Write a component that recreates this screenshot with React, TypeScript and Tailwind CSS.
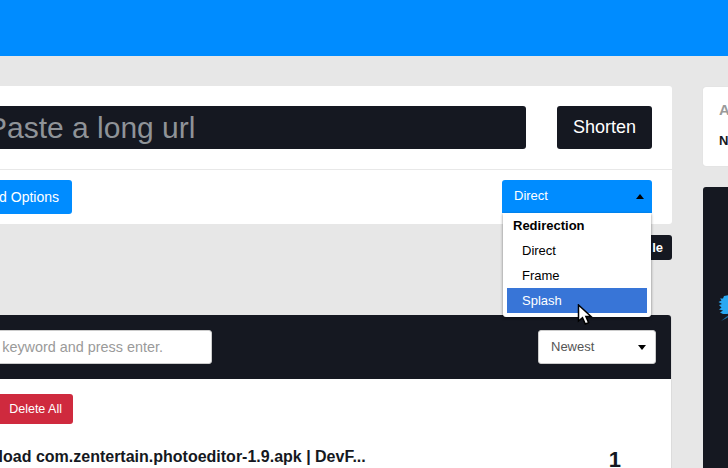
import React from "react";

export default function App() {
  return (
    <div className="w-[728px] h-[468px] overflow-hidden bg-[#e7e7e7] font-['Liberation_Sans',Arial,sans-serif] relative">
      <div className="h-14 bg-[#008cff]" />
      <div className="flex mt-[30px] -ml-[40px] w-[900px]">
        <div className="w-[712px] shrink-0">
          <div className="bg-white rounded-[3px] h-[138px]">
            <div className="h-[84px] pt-5 pl-[30px] pr-5 flex border-b border-[#e8e8e8]">
              <div className="w-[536px] h-[43px] bg-[#151821] rounded-[3px] text-[#8f9398] text-[30px] leading-[44px] whitespace-nowrap">
                <span className="block -ml-[3px]">Paste a long url</span>
              </div>
              <div className="ml-[31px] w-[95px] h-[43px] bg-[#151821] rounded-[3px] text-white text-[18px] leading-[43px] text-center">
                Shorten
              </div>
            </div>
            <div className="pt-[10px] pl-[30px] pr-5 flex justify-between">
              <div className="w-[82px] h-[34px] bg-[#008cff] rounded-[3px] text-white text-[14px] leading-[34px] overflow-hidden whitespace-nowrap">
                <span className="block text-right pr-[13px]">d Options</span>
              </div>
              <div className="w-[150px] h-[33px] bg-[#008cff] rounded-t-[3px] text-white text-[13px] leading-[31px] pl-3 relative">
                Direct
                <span className="absolute right-[8px] top-[14px] w-0 h-0 border-x-[4px] border-x-transparent border-b-[5px] border-b-black" />
              </div>
            </div>
          </div>
          <div className="h-[91px] flex justify-end items-start pt-[11px]">
            <div className="bg-[#151821] h-[25px] w-[40px] rounded-[3px] text-white text-[13px] font-bold leading-[25px] text-right pr-[9px]">le</div>
          </div>
          <div className="bg-white rounded-t-[3px] h-[200px] border-r border-[#dcdcdc]">
            <div className="bg-[#151821] h-16 rounded-t-[3px] flex justify-between items-center pr-[15px]">
              <div className="ml-[20px] w-[232px] h-[34px] bg-white rounded-[3px] border border-[#ccc] text-[#9a9a9a] text-[14.4px] leading-[32px] text-right pr-[48px] whitespace-nowrap">
                keyword and press enter.
              </div>
              <div className="w-[118px] h-[34px] bg-white rounded-[3px] border border-[#ccc] text-[#555] text-[13px] leading-[32px] pl-[12px] relative">
                Newest
                <span className="absolute right-[9px] top-[14px] w-0 h-0 border-x-[4px] border-x-transparent border-t-[5px] border-t-black" />
              </div>
            </div>
            <div className="pl-[30px] pt-[15px] h-[136px] relative overflow-hidden">
              <div className="w-[83px] h-[30px] bg-[#cf2a3e] rounded-[3px] text-white text-[12.5px] leading-[30px] text-right pr-[11px]">Delete All</div>
              <div className="flex justify-between mt-[24px] pr-[50px]">
                <div className="text-[#151821] text-[16px] font-bold whitespace-nowrap leading-[18px] -ml-[30px] -translate-x-[15px] pl-[10px]">Download com.zentertain.photoeditor-1.9.apk | DevF...</div>
                <div className="text-[#151821] text-[22px] font-bold leading-[18px] pt-[3px]">1</div>
              </div>
            </div>
          </div>
        </div>
        <div className="ml-[31px] w-[150px] shrink-0">
          <div className="bg-white rounded-[3px] h-[79px] mt-[1px] pl-4 pt-[14px] shadow-[0_0_1px_#ccc]">
            <div className="text-[#9a9a9a] text-[15px] font-bold leading-[18px]">A</div>
            <div className="text-[#151821] text-[13px] font-bold leading-[18px] mt-[13px]">N</div>
          </div>
          <div className="bg-[#151821] rounded-t-[3px] h-[300px] mt-[21px]" />
        </div>
      </div>

      <div className="absolute left-[718px] top-[295px]">
        <svg width="12" height="27" viewBox="0 0 12 27">
          <path d="M6 1 L12 0 L12 18 L9 19 L5 19 L2 17.5 L5 15.5 L1 14.5 L3.5 12.5 L1 10 L4 9 L0.5 7 L3.5 5.5 L2 3.5 L5 3.5 Z" fill="#2aa8f2" />
          <path d="M3 26 L8 22 L12 19.5 L12 21 L8 23.5 Z" fill="#1b6fa6" />
        </svg>
      </div>

      <div className="absolute left-[503px] top-[213px] w-[148px] h-[104px] bg-white rounded-b-[3px] shadow-[0_1px_3px_rgba(0,0,0,0.5)] px-1 text-[13px] text-black">
        <div className="font-bold leading-[25px] pl-[6px]">Redirection</div>
        <div className="leading-[25px] pl-[15px]">Direct</div>
        <div className="leading-[25px] pl-[15px]">Frame</div>
        <div className="leading-[25px] pl-[15px] bg-[#3875d7] text-white">Splash</div>
      </div>

      <svg className="absolute left-[577px] top-[304px]" width="16" height="22" viewBox="0 0 16 22">
        <path d="M1.5 1 L1.5 17 L5.5 13.7 L8.3 20 L11.6 18.6 L8.9 12.4 L14 12.4 Z" fill="#fff" stroke="#000" strokeWidth="1.5" />
      </svg>
    </div>
  );
}
